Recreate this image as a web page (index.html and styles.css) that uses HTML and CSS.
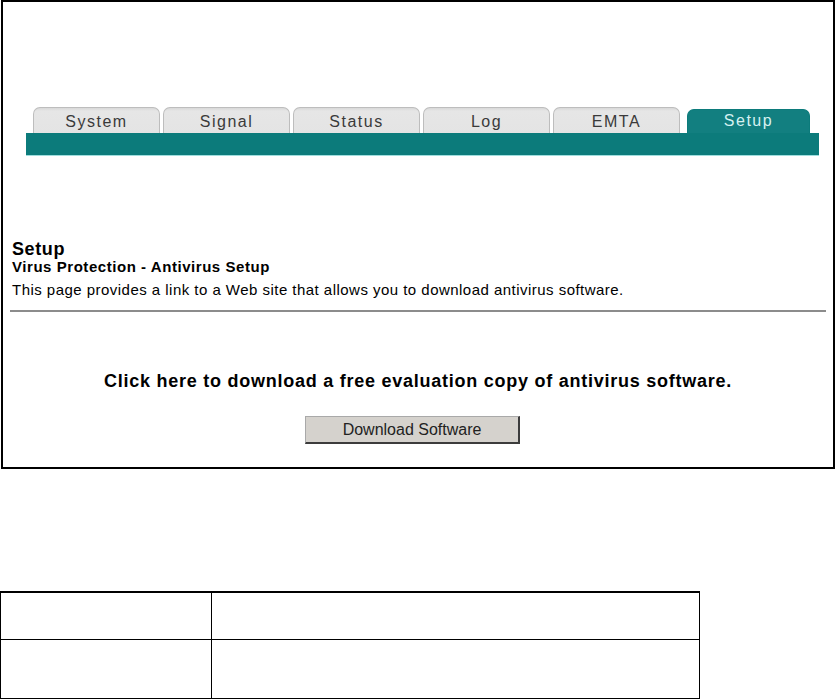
FILE: index.html
```html
<!DOCTYPE html>
<html>

<head>
    <title>Setup - Virus Protection</title>
    <link rel="stylesheet" href="styles.css">
</head>

<body>
    <div class="frame">
        <div class="nav">
            <ul class="tabs">
                <li class="tab">System</li>
                <li class="tab">Signal</li>
                <li class="tab">Status</li>
                <li class="tab">Log</li>
                <li class="tab">EMTA</li>
                <li class="tab active">Setup</li>
            </ul>
            <div class="tab-bar"></div>
        </div>
        <div class="content">
            <h2 class="page-title">Setup</h2>
            <h3 class="page-subtitle">Virus Protection - Antivirus Setup</h3>
            <p class="page-desc">This page provides a link to a Web site that allows you to download antivirus software.</p>
            <hr class="divider">
            <p class="download-text">Click here to download a free evaluation copy of antivirus software.</p>
            <div class="download-row">
                <button class="download-btn">Download Software</button>
            </div>
        </div>
    </div>

    <table class="info-table">
        <tr>
            <td class="col-name"></td>
            <td class="col-desc"></td>
        </tr>
        <tr class="row-tall">
            <td class="col-name"></td>
            <td class="col-desc"></td>
        </tr>
    </table>
</body>

</html>
```

FILE: styles.css
```css
body {
    margin: 0;
    font-family: "Liberation Sans", Arial, sans-serif;
    color: #000;
    background-color: #fff;
}

.frame {
    width: 830px;
    height: 465px;
    margin-left: 1px;
    border: 2px solid #000;
}

/* tabs */
.nav {
    padding-top: 105px;
}

.tabs {
    display: flex;
    align-items: flex-end;
    gap: 3px;
    list-style: none;
    margin: 0;
    padding: 0 0 0 30px;
    height: 26px;
}

.tab {
    box-sizing: border-box;
    width: 127px;
    height: 26px;
    padding-top: 5px;
    border: 1px solid #bdbdbd;
    border-bottom: none;
    border-radius: 7px 7px 0 0;
    background: linear-gradient(#d8d8d8, #e6e6e6 3px, #e4e4e4);
    color: #3a3a3a;
    font-size: 16px;
    line-height: 18px;
    letter-spacing: 1.5px;
    text-align: center;
}

.tab.active {
    width: 123px;
    height: 24px;
    margin-left: 4px;
    padding-top: 2px;
    border-color: #0c7b7b;
    background: #127f80;
    color: #d6f1f1;
}

.tab-bar {
    width: 793px;
    height: 22px;
    margin-left: 23px;
    background-color: #0c7b7b;
    border-bottom: 1px solid #9fdede;
}

/* page body */
.content {
    padding: 84px 7px 0;
}

.page-title {
    margin: 0;
    padding-left: 2px;
    font-size: 18px;
    line-height: 18px;
    letter-spacing: 0.6px;
    font-weight: bold;
}

.page-subtitle {
    margin: 0;
    padding-left: 2px;
    font-size: 15px;
    line-height: 17px;
    letter-spacing: 0.55px;
    font-weight: bold;
}

.page-desc {
    margin: 6px 0 0;
    padding-left: 2px;
    font-size: 15px;
    line-height: 17px;
    letter-spacing: 0.47px;
}

.divider {
    margin: 12px 0 0;
    height: 0;
    border: none;
    border-top: 2px solid #8c8c8c;
}

.download-text {
    margin: 59px 0 0;
    font-size: 18px;
    line-height: 20px;
    font-weight: bold;
    letter-spacing: 0.75px;
    text-align: center;
}

.download-row {
    margin-top: 25px;
    text-align: center;
}

.download-btn {
    box-sizing: border-box;
    width: 215px;
    height: 28px;
    margin-right: 11px;
    padding: 0;
    border: 1px solid #a9a9a9;
    border-right: 2px solid #3c3c3c;
    border-bottom: 2px solid #3c3c3c;
    background-color: #d5d2cd;
    font-family: "Liberation Sans", Arial, sans-serif;
    font-size: 16px;
    color: #222;
}

/* table under the screenshot */
.info-table {
    margin-top: 122px;
    width: 700px;
    border-collapse: collapse;
}

.info-table td {
    border: 1px solid #000;
    height: 46px;
    padding: 0;
}

.info-table tr:first-child td {
    border-top: 2px solid #000;
}

.info-table .row-tall td {
    height: 58px;
}

.col-name {
    width: 210px;
}
```
